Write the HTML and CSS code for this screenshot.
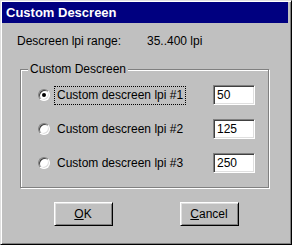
FILE: index.html
```html
<!DOCTYPE html>
<html lang="en">
<head>
    <meta charset="UTF-8">
    <title>Custom Descreen</title>
    <link rel="stylesheet" href="styles.css">
</head>
<body>
    <div class="dialog">
        <div class="title-bar">Custom Descreen</div>

        <div class="range-row">
            <span class="range-label">Descreen lpi range:</span>
            <span class="range-value">35..400 lpi</span>
        </div>

        <fieldset class="group">
            <legend>Custom Descreen</legend>
            <div class="option-row">
                <span class="radio checked"></span>
                <span class="option-label focused">Custom descreen lpi #1</span>
                <input type="text" class="lpi-input" value="50">
            </div>
            <div class="option-row">
                <span class="radio"></span>
                <span class="option-label">Custom descreen lpi #2</span>
                <input type="text" class="lpi-input" value="125">
            </div>
            <div class="option-row">
                <span class="radio"></span>
                <span class="option-label">Custom descreen lpi #3</span>
                <input type="text" class="lpi-input" value="250">
            </div>
        </fieldset>

        <div class="button-row">
            <button><u>O</u>K</button>
            <button><u>C</u>ancel</button>
        </div>
    </div>
</body>
</html>
```

FILE: styles.css
```css
body {
    margin: 0;
    font-family: "Liberation Sans", Arial, sans-serif;
    font-size: 12px;
    color: #000;
    background: #c0c0c0;
}

.dialog {
    box-sizing: border-box;
    width: 292px;
    height: 245px;
    padding: 1px;
    background: #c0c0c0;
    border: 1px solid;
    border-color: #dfdfdf #000 #000 #dfdfdf;
    box-shadow: inset 1px 1px 0 #fff, inset -1px -1px 0 #808080;
}

.title-bar {
    height: 21px;
    line-height: 21px;
    margin-right: 2px;
    padding-left: 4px;
    background: #000080;
    color: #fff;
    font-weight: bold;
    font-size: 13px;
}

.range-row {
    display: flex;
    margin-top: 11px;
    padding-left: 15px;
    line-height: 15px;
}

.range-label {
    width: 130px;
}

.group {
    margin: 13px 0 0 18px;
    width: 249px;
    box-sizing: border-box;
    padding: 8px 0 14px 7px;
    border: 1px solid #808080;
    box-shadow: inset 1px 1px 0 #fff, 1px 1px 0 #fff;
}

.group legend {
    padding: 0 2px;
    line-height: 15px;
    background: #c0c0c0;
}

.option-row {
    display: flex;
    align-items: center;
    height: 20px;
    padding-left: 10px;
    margin-bottom: 14px;
}

.option-row:last-child {
    margin-bottom: 0;
}

.radio {
    position: relative;
    box-sizing: border-box;
    width: 12px;
    height: 12px;
    border-radius: 50%;
    background: #fff;
    border: 1px solid;
    border-color: #808080 #fff #fff #808080;
    box-shadow: inset 1px 1px 0 #404040, inset -1px -1px 0 #dfdfdf;
}

.radio.checked::after {
    content: "";
    position: absolute;
    left: 3px;
    top: 3px;
    width: 4px;
    height: 4px;
    border-radius: 50%;
    background: #000;
}

.option-label {
    margin-left: 4px;
    padding: 1px 2px;
    line-height: 15px;
    border: 1px dotted transparent;
}

.option-label.focused {
    border-color: #000;
}

.lpi-input {
    box-sizing: border-box;
    width: 42px;
    height: 20px;
    margin-left: auto;
    margin-right: 13px;
    padding: 0 3px;
    font-family: inherit;
    font-size: 12px;
    background: #fff;
    border: 1px solid;
    border-color: #808080 #fff #fff #808080;
    box-shadow: inset 1px 1px 0 #404040, inset -1px -1px 0 #dfdfdf;
    outline: none;
}

.button-row {
    display: flex;
    justify-content: center;
    gap: 67px;
    margin-top: 14px;
}

button {
    box-sizing: border-box;
    width: 59px;
    height: 24px;
    padding: 0;
    font-family: inherit;
    font-size: 12px;
    color: #000;
    background: #c0c0c0;
    border: 1px solid;
    border-color: #fff #000 #000 #fff;
    box-shadow: inset 1px 1px 0 #dfdfdf, inset -1px -1px 0 #808080;
}
```
